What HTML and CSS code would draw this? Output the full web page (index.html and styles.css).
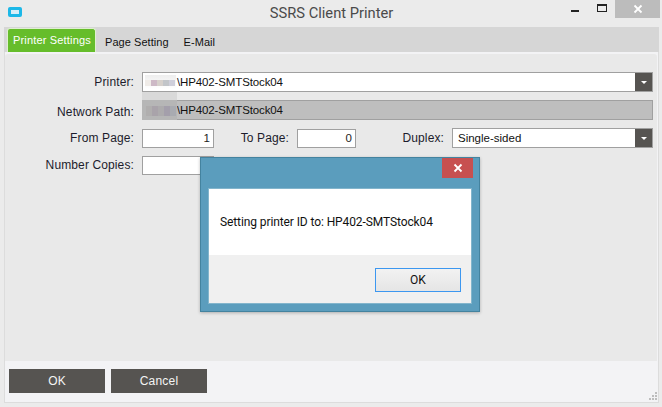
FILE: index.html
```html
<!DOCTYPE html>
<html lang="en">
<head>
<meta charset="utf-8">
<title>SSRS Client Printer</title>
<link rel="stylesheet" href="styles.css">
</head>
<body>
<div class="window">
  <header class="titlebar">
    <span class="app-icon"><span class="app-icon-inner"></span></span>
    <h1 class="title">SSRS Client Printer</h1>
    <div class="controls">
      <span class="ctl ctl-min"><span class="min"></span></span>
      <span class="ctl ctl-max"><span class="max"></span></span>
      <span class="ctl ctl-close"><svg width="10" height="10" viewBox="0 0 10 10"><path d="M1.5 1.5l7 7M8.5 1.5l-7 7" stroke="#fff" stroke-width="1.8"/></svg></span>
    </div>
  </header>
  <div class="body">
    <nav class="tabs">
      <span class="tab tab-active">Printer Settings</span>
      <span class="tab">Page Setting</span>
      <span class="tab">E-Mail</span>
    </nav>
    <main class="panel">
      <div class="row row-printer">
        <label class="label">Printer:</label>
        <div class="field field-wide">
          <span class="blur blur-light"><i></i><i></i><i></i><i></i><i></i></span>
          <span class="value">\HP402-SMTStock04</span>
          <span class="drop"><span class="caret"></span></span>
        </div>
      </div>
      <div class="row row-network">
        <label class="label">Network Path:</label>
        <div class="field field-wide field-disabled">
          <span class="blur blur-dark"><i></i><i></i><i></i><i></i><i></i></span>
          <span class="value">\HP402-SMTStock04</span>
        </div>
      </div>
      <div class="row row-pages">
        <label class="label">From Page:</label>
        <div class="field field-num"><span class="num">1</span></div>
        <label class="label label-to">To Page:</label>
        <div class="field field-num field-to"><span class="num">0</span></div>
        <label class="label label-duplex">Duplex:</label>
        <div class="field field-duplex">
          <span class="value value-plain">Single-sided</span>
          <span class="drop"><span class="caret"></span></span>
        </div>
      </div>
      <div class="row">
        <label class="label">Number Copies:</label>
        <div class="field field-num"></div>
      </div>
    </main>
    <footer class="footer">
      <button class="btn">OK</button>
      <button class="btn">Cancel</button>
      <svg class="grip" width="8" height="8" viewBox="0 0 8 8"><path fill="#bdbdbd" d="M6 0h2v2H6zM3 3h2v2H3zM6 3h2v2H6zM0 6h2v2H0zM3 6h2v2H3zM6 6h2v2H6z"/></svg>
    </footer>
  </div>
  <div class="dialog">
    <div class="dialog-head">
      <span class="dialog-close"><svg width="10" height="10" viewBox="0 0 10 10"><path d="M1.5 1.5l7 7M8.5 1.5l-7 7" stroke="#fff" stroke-width="1.8"/></svg></span>
    </div>
    <div class="dialog-inner">
      <div class="dialog-msg">Setting printer ID to: HP402-SMTStock04</div>
      <div class="dialog-foot"><button class="dialog-ok">OK</button></div>
    </div>
  </div>
</div>
</body>
</html>
```
FILE: styles.css
```css
* { box-sizing: border-box; }
html, body { margin: 0; padding: 0; }
body { width: 662px; height: 407px; overflow: hidden; background: #ebebeb; font-family: "Liberation Sans", Arial, sans-serif; }
.window { position: relative; width: 662px; height: 407px; display: flex; flex-direction: column; padding: 0 3px 4px 4px; }
.titlebar { height: 27px; flex: none; position: relative; display: flex; justify-content: center; }
.app-icon { position: absolute; left: 4px; top: 7px; width: 14px; height: 10px; background: #1cb8e8; border-radius: 2px; display: flex; align-items: center; justify-content: center; }
.app-icon-inner { width: 8px; height: 4px; background: #d6eef8; }
.title { margin: 3px 0 0; font: 400 14.7px/20px Roboto, sans-serif; color: #4a4a4a; }
.controls { position: absolute; right: -1px; top: 0; display: flex; }
.ctl { height: 18px; display: flex; align-items: center; justify-content: center; }
.ctl-min { width: 26px; }
.ctl-max { width: 23px; }
.ctl-close { width: 45px; background: #bcbcbc; }
.min { width: 8px; height: 2px; background: #222; margin-top: 4px; margin-right: 8px; }
.max { width: 10px; height: 8px; border: 1px solid #222; border-top-width: 2px; margin-top: -2px; margin-right: 3px; }
.body { flex: 1; display: flex; flex-direction: column; background: #f3f3f5; border-right: 1px solid #dcdcdc; border-bottom: 1px solid #dcdcdc; border-left: 1px solid #dcdcdc; }
.tabs { height: 25px; flex: none; background: #d6d6d6; display: flex; align-items: flex-end; margin: 0 -1px; padding-left: 3px; }
.tab { font-size: 11px; letter-spacing: .05px; color: #111; height: 25px; line-height: 30px; }
.tab:nth-child(2) { margin-left: 9px; }
.tab:nth-child(3) { margin-left: 15px; }
.tab-active { width: 89px; margin-top: 1px; height: 24px; line-height: 22px; padding-left: 5px; letter-spacing: .17px; background: #66bd2b; color: #fff; border: 1px solid #dff0d0; border-bottom: 0; border-radius: 3px 3px 0 0; }
.panel { flex: 1; margin: 2px 1px 0 0; background: #e9e9e9; border-radius: 3px 3px 0 0; padding-top: 18px; }
.row { display: flex; align-items: center; height: 20px; margin-bottom: 8px; }
.row-pages { margin-bottom: 7px; }
.label { width: 129px; text-align: right; font-size: 12px; letter-spacing: .12px; color: #1c1c2c; flex: none; margin-right: 8px; }
.row-network .label { padding-top: 4px; }
.label-to { width: 75px; }
.label-duplex { width: 88px; }
.field { height: 20px; background: #fff; border: 1px solid #a0a0a0; position: relative; display: flex; align-items: center; font-size: 11.5px; color: #111; }
.field-wide { width: 511px; }
.field-disabled { background: #bebebe; }
.field-num { width: 72px; height: 19px; justify-content: flex-end; padding-right: 3px; }
.field-to { width: 59px; }
.field-duplex { width: 201px; }
.value { margin-left: 34px; letter-spacing: -.13px; }
.value-plain { margin-left: 5px; letter-spacing: 0; }
.num { color: #222; }
.drop { position: absolute; right: 0; top: 0; bottom: 0; width: 17px; background: #565451; display: flex; align-items: center; justify-content: center; }
.caret { width: 0; height: 0; border-left: 3px solid transparent; border-right: 3px solid transparent; border-top: 3px solid #fff; }
.blur { position: absolute; left: 2px; top: 2px; width: 31px; height: 14px; display: flex; align-items: flex-start; background: linear-gradient(#eeeeee, #ffffff); }
.blur i { display: block; width: 6px; height: 6px; margin-top: 5px; }
.blur-light i:nth-child(1) { background: #f0ece8; }
.blur-light i:nth-child(2) { background: #cdb9c6; }
.blur-light i:nth-child(3) { background: #d6d0cb; }
.blur-light i:nth-child(4) { background: #c2c5c9; }
.blur-light i:nth-child(5) { background: #cfcfdb; }
.blur-dark { left: -1px; top: -9px; width: 35px; height: 28px; background: linear-gradient(#d9d9d9 8px, #b6b6b6 8px); }
.blur-dark i { width: 6px; height: 10px; margin-top: 14px; }
.blur-dark i:nth-child(1) { margin-left: 4px; background: #b0aeae; }
.blur-dark i:nth-child(2) { background: #a9a3aa; }
.blur-dark i:nth-child(3) { background: #adabad; }
.blur-dark i:nth-child(4) { background: #a49fab; }
.blur-dark i:nth-child(5) { background: #a9abb1; }
.footer { height: 41px; flex: none; position: relative; display: flex; gap: 6px; padding: 8px 0 0 4px; }
.btn { width: 96px; height: 24px; padding: 0; background: #565451; color: #f4f4f4; border: 0; font: 12px "Liberation Sans", Arial, sans-serif; letter-spacing: .2px; }
.grip { position: absolute; right: 1px; bottom: 2px; }
.dialog { position: absolute; left: 200px; top: 157px; width: 280px; height: 155px; background: #5b9dbd; border: 1px solid #44839f; box-shadow: 0 1px 3px rgba(0,0,0,.25); display: flex; flex-direction: column; padding: 0 7px 7px 7px; }
.dialog-head { height: 30px; flex: none; display: flex; justify-content: flex-end; margin-right: -1px; }
.dialog-close { width: 31px; height: 20px; background: #c75050; display: flex; align-items: center; justify-content: center; }
.dialog-inner { flex: 1; display: flex; flex-direction: column; background: #fff; border: 1px solid #83b5cc; }
.dialog-msg { height: 66px; flex: none; padding: 24px 0 0 11px; font: 12px/18px Roboto, sans-serif; letter-spacing: -.1px; color: #111; background: #fff; }
.dialog-foot { flex: 1; background: #f0f0f0; padding: 13px 10px 0 0; display: flex; justify-content: flex-end; align-items: flex-start; }
.dialog-ok { width: 86px; height: 24px; padding: 0; border: 1px solid #3c97f0; background: linear-gradient(#f2f2f2, #e5e5e5); font: 12px Roboto, sans-serif; color: #111; }
```
